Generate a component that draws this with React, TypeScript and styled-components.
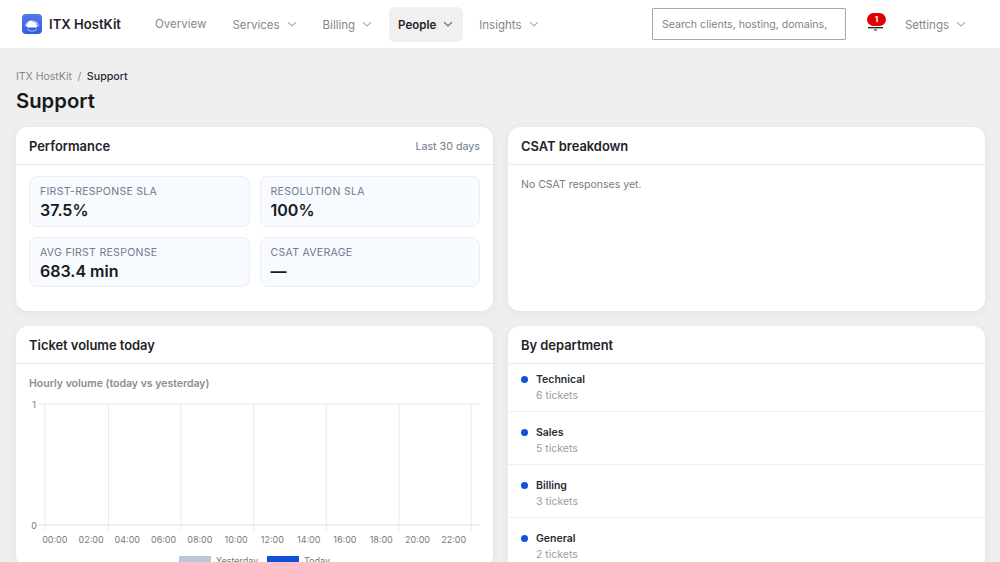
import styled, { createGlobalStyle } from 'styled-components';

const GlobalStyle = createGlobalStyle`
    html, body {
        margin: 0;
        height: 100%;
        overflow: hidden;
        background: #efefef;
        font-family: Inter, "Liberation Sans", sans-serif;
        color: #1a1a1a;
    }
    * {
        box-sizing: border-box;
    }
`;

const Header = styled.header`
    display: flex;
    align-items: center;
    height: 48px;
    padding: 0 24px 0 22px;
    background: #fff;
`;

const Brand = styled.div`
    display: flex;
    align-items: center;
    gap: 7px;
    width: 124px;
    font-size: 13.1px;
    font-weight: 600;
    color: #1f2329;
`;

const Nav = styled.nav`
    display: flex;
    align-items: center;
    gap: 7px;
    margin-right: auto;
`;

const NavItem = styled.div<{ $active?: boolean; $plain?: boolean }>`
    display: flex;
    align-items: center;
    gap: 7px;
    height: 35px;
    padding: ${(p) => (p.$plain ? '0 10px 0 9px' : '1px 10px 0 9px')};
    border-radius: 6px;
    font-size: 11.5px;
    font-weight: ${(p) => (p.$active ? 600 : 400)};
    color: ${(p) => (p.$active ? '#1f2329' : '#85878b')};
    background: ${(p) => (p.$active ? '#f0f0f0' : 'transparent')};
`;

const Chevron = ({ dark }: { dark?: boolean }) => (
    <svg width="10" height="10" viewBox="0 0 10 10" fill="none">
        <path
            d="M1.5 2.7 L5 5.9 L8.5 2.7"
            stroke={dark ? '#55585d' : '#a4a6aa'}
            strokeWidth="1.1"
            strokeLinecap="round"
            strokeLinejoin="round"
        />
    </svg>
);

const Search = styled.input`
    width: 194px;
    height: 32px;
    padding: 0 17px 0 9px;
    border: 1px solid #a8a8a8;
    border-radius: 1px;
    outline: none;
    font-family: inherit;
    font-size: 10.6px;
    background: #fff;

    &::placeholder {
        color: #808388;
        opacity: 1;
    }
`;

const BellWrap = styled.div`
    position: relative;
    width: 18px;
    height: 20px;
    margin: 0 11px 0 21px;
`;

const Badge = styled.span`
    position: absolute;
    left: 0;
    top: -1px;
    width: 19px;
    height: 13px;
    border-radius: 7px;
    background: #e10000;
    color: #fff;
    font-size: 8px;
    font-weight: 700;
    line-height: 13px;
    text-align: center;
`;

const Main = styled.main`
    padding: 22px 15px 0 16px;
`;

const Crumbs = styled.div`
    display: flex;
    gap: 5.5px;
    font-size: 10.5px;
    line-height: 14px;
    color: #85878b;

    b {
        font-size: 10.7px;
        font-weight: 500;
        color: #2a2d33;
    }
`;

const Title = styled.h1`
    margin: 3px 0 12px;
    font-size: 20.3px;
    line-height: 28px;
    font-weight: 600;
    color: #17191d;
`;

const Grid = styled.div`
    display: grid;
    grid-template-columns: 477px 477px;
    gap: 15px;
    align-items: start;
`;

const Card = styled.section<{ $height?: number }>`
    height: ${(p) => (p.$height ? `${p.$height}px` : 'auto')};
    border-radius: 12px;
    background: #fff;
    box-shadow: 0 2px 10px rgba(20, 30, 50, 0.06);
    overflow: hidden;
`;

const CardHead = styled.div`
    display: flex;
    align-items: center;
    justify-content: space-between;
    height: 38px;
    padding: 1px 13px 0;
    border-bottom: 1px solid #ececec;
`;

const CardTitle = styled.h2`
    margin: 0;
    font-size: 12.9px;
    font-weight: 600;
    color: #1f2329;
`;

const CardMeta = styled.span`
    font-size: 10.7px;
    color: #6d7a8c;
`;

const Stats = styled.div`
    display: grid;
    grid-template-columns: 1fr 1fr;
    gap: 10px;
    padding: 11px 13px;
`;

const Stat = styled.div`
    height: 50.5px;
    padding: 8px 10px;
    border: 1px solid #e8eef4;
    border-radius: 8px;
    background: #f7fafe;
`;

const StatLabel = styled.div`
    font-size: 10.5px;
    line-height: 14px;
    letter-spacing: 0.3px;
    color: #6f7b8c;
`;

const StatValue = styled.div`
    margin-top: 1px;
    font-size: 16px;
    line-height: 20px;
    font-weight: 600;
    color: #17191d;
`;

const EmptyNote = styled.p`
    margin: 0;
    padding: 13px;
    font-size: 10.5px;
    color: #777a80;
`;

const ChartBody = styled.div`
    padding: 13px 13px 0;
`;

const ChartTitle = styled.div`
    margin-bottom: 4px;
    font-size: 10.5px;
    font-weight: 600;
    line-height: 14px;
    color: #8b8d91;
`;

const DeptList = styled.div`
    display: flex;
    flex-direction: column;
`;

const DeptRow = styled.div`
    display: flex;
    gap: 8px;
    padding: 13px 13px 8px;
    border-bottom: 1px solid #efefef;

    &:first-child {
        padding-top: 8px;
    }
`;

const Dot = styled.span`
    flex: none;
    width: 7px;
    height: 7px;
    margin-top: 4px;
    border-radius: 50%;
    background: #1450d8;
`;

const DeptName = styled.div`
    font-size: 10.5px;
    line-height: 15px;
    font-weight: 600;
    color: #2a2d33;
`;

const DeptCount = styled.div`
    margin-top: 1px;
    font-size: 10.5px;
    line-height: 15px;
    color: #9a9ca0;
`;

const Logo = () => (
    <svg width="20" height="20" viewBox="0 0 20 20">
        <defs>
            <linearGradient id="logoFill" x1="0" y1="0" x2="0" y2="1">
                <stop offset="0" stopColor="#4f7cec" />
                <stop offset="1" stopColor="#3359dc" />
            </linearGradient>
        </defs>
        <rect width="20" height="20" rx="4" fill="url(#logoFill)" />
        <path
            d="M3.6 12 a6.6 6.6 0 0 1 12.8 0"
            fill="none"
            stroke="#bfd0f8"
            strokeWidth="1.2"
            strokeLinecap="round"
        />
        <path
            d="M5.4 15.4 a6.6 6.6 0 0 0 9.2 0"
            fill="none"
            stroke="#9db6f3"
            strokeWidth="1.1"
            strokeLinecap="round"
        />
        <path
            d="M6.2 13.6 a2.2 2.2 0 0 1 -.2-4.3 a3 3 0 0 1 5.6-1 a2.6 2.6 0 0 1 2.9 2.6 a1.4 1.4 0 0 1 -.3 2.7 z"
            fill="#fff"
        />
    </svg>
);

const Bell = () => (
    <svg width="18" height="20" viewBox="0 0 18 20" fill="none">
        <path d="M1 13.7 H16" stroke="#1a1a1a" strokeWidth="1.3" />
        <path d="M6.5 15.4 H10.5 L8.5 17 Z" fill="#1a1a1a" />
    </svg>
);

const HOURS = ['00:00', '02:00', '04:00', '06:00', '08:00', '10:00', '12:00', '14:00', '16:00', '18:00', '20:00', '22:00'];
const GRID_X = [45, 108.5, 181, 253.7, 326.3, 399, 471.3];

// chart is offset by the card padding, x=29 / y=395 on the page
const Chart = () => (
    <svg width="451" height="172" viewBox="29 395 451 172" style={{ display: 'block' }}>
        {GRID_X.map((x) => (
            <line key={x} x1={x} x2={x} y1={404} y2={531} stroke="#ebebeb" />
        ))}
        <line x1={38} x2={480} y1={404} y2={404} stroke="#ebebeb" />
        <line x1={38} x2={480} y1={525} y2={525} stroke="#dedede" />
        <g fontSize="9" fill="#77797d" fontFamily="Inter, sans-serif">
            <text x={34} y={407.5} textAnchor="middle">1</text>
            <text x={34} y={528.5} textAnchor="middle">0</text>
            {HOURS.map((h, i) => (
                <text key={h} x={54.8 + i * 36.27} y={542.5} textAnchor="middle">{h}</text>
            ))}
            <rect x={179} y={556} width={32} height={10} fill="#bcc6d6" />
            <text x={216} y={564}>Yesterday</text>
            <rect x={267} y={556} width={32} height={10} fill="#1450d8" />
            <text x={304} y={564}>Today</text>
        </g>
    </svg>
);

const DEPARTMENTS = [
    { name: 'Technical', count: 6 },
    { name: 'Sales', count: 5 },
    { name: 'Billing', count: 3 },
    { name: 'General', count: 2 },
];

const App = () => (
    <>
        <GlobalStyle />
        <Header>
            <Brand>
                <Logo />
                ITX HostKit
            </Brand>
            <Nav>
                <NavItem $plain>Overview</NavItem>
                <NavItem>Services <Chevron /></NavItem>
                <NavItem>Billing <Chevron /></NavItem>
                <NavItem $active>People <Chevron dark /></NavItem>
                <NavItem>Insights <Chevron /></NavItem>
            </Nav>
            <Search placeholder="Search clients, hosting, domains, tickets" />
            <BellWrap>
                <Bell />
                <Badge>1</Badge>
            </BellWrap>
            <NavItem>Settings <Chevron /></NavItem>
        </Header>
        <Main>
            <Crumbs>
                <span>ITX HostKit</span>
                <span>/</span>
                <b>Support</b>
            </Crumbs>
            <Title>Support</Title>
            <Grid>
                <Card $height={184}>
                    <CardHead>
                        <CardTitle>Performance</CardTitle>
                        <CardMeta>Last 30 days</CardMeta>
                    </CardHead>
                    <Stats>
                        <Stat>
                            <StatLabel>FIRST-RESPONSE SLA</StatLabel>
                            <StatValue>37.5%</StatValue>
                        </Stat>
                        <Stat>
                            <StatLabel>RESOLUTION SLA</StatLabel>
                            <StatValue>100%</StatValue>
                        </Stat>
                        <Stat>
                            <StatLabel>AVG FIRST RESPONSE</StatLabel>
                            <StatValue>683.4 min</StatValue>
                        </Stat>
                        <Stat>
                            <StatLabel>CSAT AVERAGE</StatLabel>
                            <StatValue>—</StatValue>
                        </Stat>
                    </Stats>
                </Card>
                <Card $height={184}>
                    <CardHead>
                        <CardTitle>CSAT breakdown</CardTitle>
                    </CardHead>
                    <EmptyNote>No CSAT responses yet.</EmptyNote>
                </Card>
                <Card>
                    <CardHead>
                        <CardTitle>Ticket volume today</CardTitle>
                    </CardHead>
                    <ChartBody>
                        <ChartTitle>Hourly volume (today vs yesterday)</ChartTitle>
                        <Chart />
                    </ChartBody>
                </Card>
                <Card>
                    <CardHead>
                        <CardTitle>By department</CardTitle>
                    </CardHead>
                    <DeptList>
                        {DEPARTMENTS.map((d) => (
                            <DeptRow key={d.name}>
                                <Dot />
                                <div>
                                    <DeptName>{d.name}</DeptName>
                                    <DeptCount>{d.count} tickets</DeptCount>
                                </div>
                            </DeptRow>
                        ))}
                    </DeptList>
                </Card>
            </Grid>
        </Main>
    </>
);

export default App;
